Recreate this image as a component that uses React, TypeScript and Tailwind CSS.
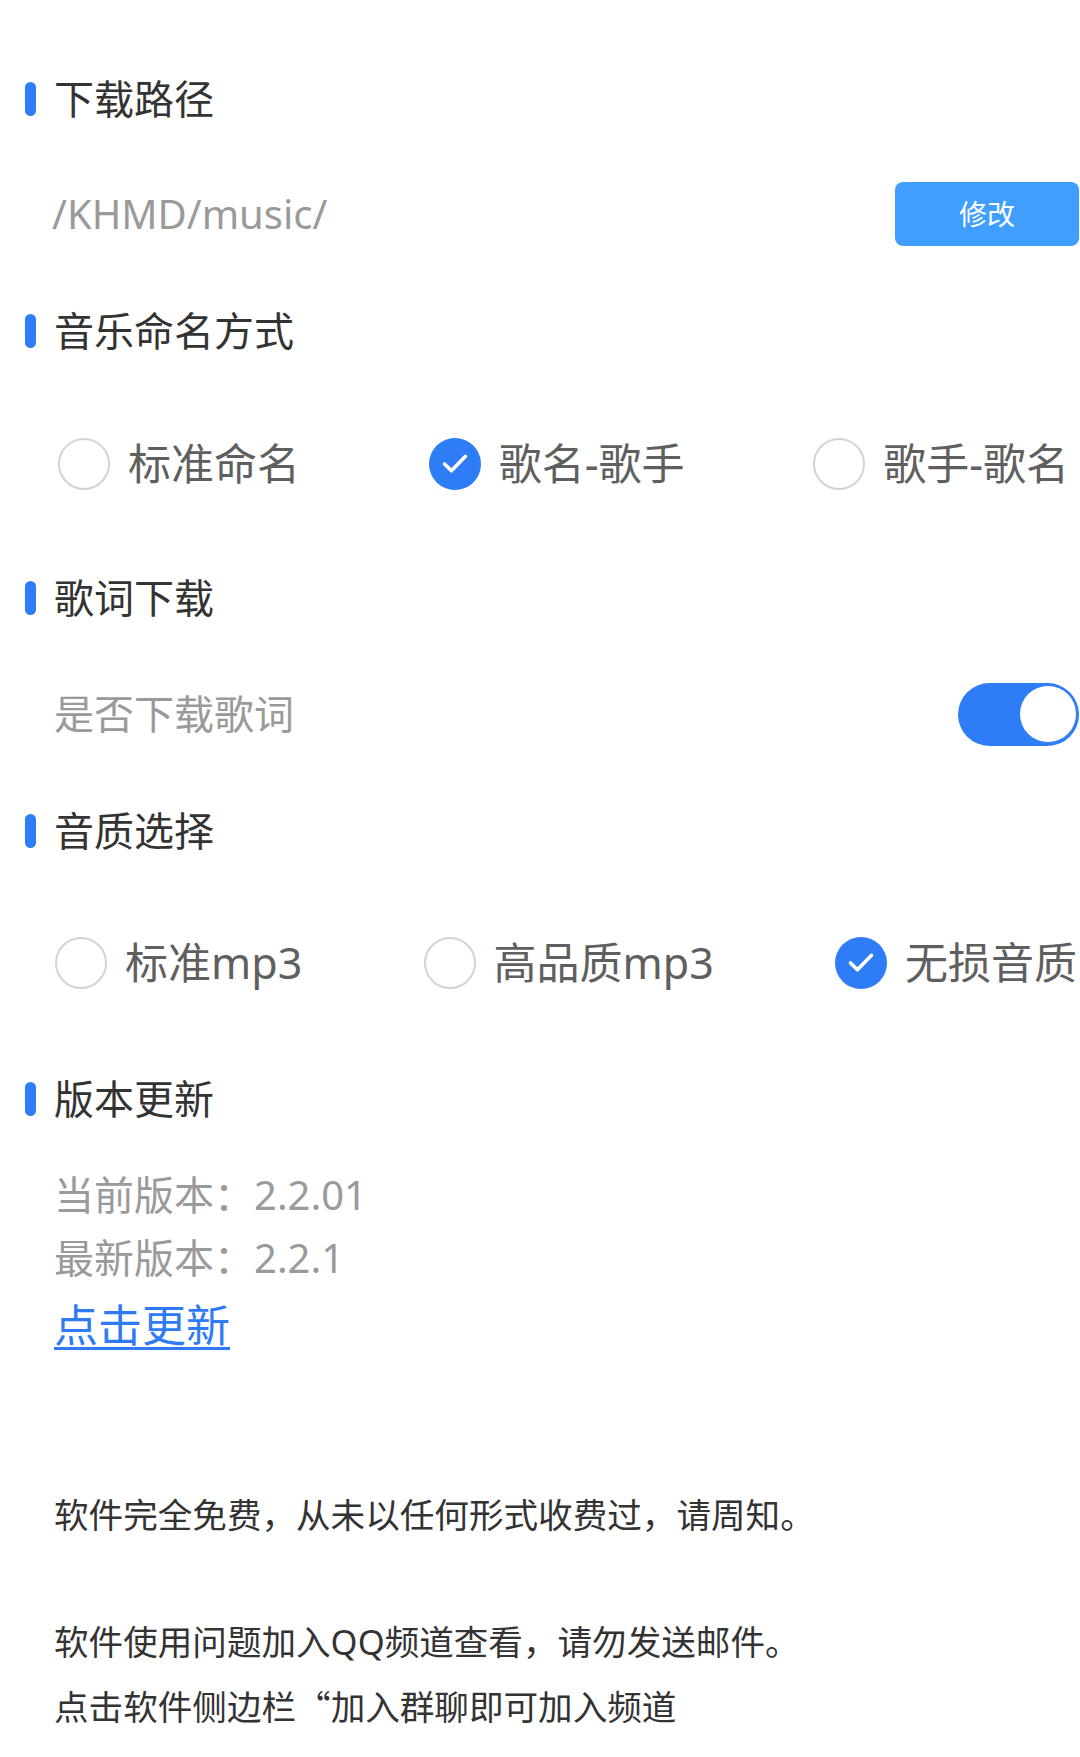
import React from "react";

const BLUE = "bg-[#2e7cf6]";

function Title({ text }: { text: string }) {
  return (
    <div className="flex items-center h-[60px]">
      <div className={`ml-[25px] w-[11px] h-[34px] rounded-full ${BLUE}`} />
      <span className="ml-[18px] text-[40px] leading-[60px] text-[#333333]">{text}</span>
    </div>
  );
}

function Radio({ checked, label }: { checked: boolean; label: string }) {
  return (
    <div className="flex items-center">
      {checked ? (
        <svg width="52" height="52" viewBox="0 0 52 52" className="shrink-0">
          <circle cx="26" cy="26" r="26" fill="#2e7cf6" />
          <polyline
            points="15.5,26 22.4,32.8 36.5,18.3"
            fill="none"
            stroke="#ffffff"
            strokeWidth="3.6"
            strokeLinecap="round"
            strokeLinejoin="round"
          />
        </svg>
      ) : (
        <div className="w-[52px] h-[52px] rounded-full border-2 border-[#d4d4d4] shrink-0" />
      )}
      <span className="ml-[18px] text-[43px] leading-[60px] text-[#5f5f5f] whitespace-nowrap">{label}</span>
    </div>
  );
}

export default function App() {
  return (
    <div className="w-[1080px] min-h-[1757px] bg-white font-['Noto_Sans','Noto_Sans_CJK_SC',sans-serif] pt-[69px]">
      <Title text="下载路径" />
      <div className="mt-[53px] h-[64px] flex items-center justify-between pl-[52px] pr-[1px]">
        <span className="text-[40px] leading-[64px] text-[#9a9a9a]">/KHMD/music/</span>
        <div className="w-[184px] h-[64px] rounded-[8px] bg-[#409eff] flex items-center justify-center text-white text-[28px]">
          修改
        </div>
      </div>

      <div className="mt-[55px]">
        <Title text="音乐命名方式" />
      </div>
      <div className="mt-[73px] h-[60px] flex items-center justify-between pl-[58px] pr-[11px]">
        <Radio checked={false} label="标准命名" />
        <Radio checked={true} label="歌名-歌手" />
        <Radio checked={false} label="歌手-歌名" />
      </div>

      <div className="mt-[74px]">
        <Title text="歌词下载" />
      </div>
      <div className="mt-[54px] h-[64px] flex items-center justify-between pl-[54px] pr-[1px]">
        <span className="text-[40px] leading-[64px] text-[#9a9a9a]">是否下载歌词</span>
        <div className={`w-[121px] h-[63px] rounded-full ${BLUE} flex items-center justify-end pr-[2px]`}>
          <div className="w-[58px] h-[58px] rounded-full bg-white border border-[#2e7cf6]" />
        </div>
      </div>

      <div className="mt-[55px]">
        <Title text="音质选择" />
      </div>
      <div className="mt-[72px] h-[60px] flex items-center justify-between pl-[55px] pr-[3px]">
        <Radio checked={false} label="标准mp3" />
        <Radio checked={false} label="高品质mp3" />
        <Radio checked={true} label="无损音质" />
      </div>

      <div className="mt-[76px]">
        <Title text="版本更新" />
      </div>
      <div className="mt-[34px] pl-[54px] text-[40px] leading-[63px] text-[#9a9a9a]">
        <div>当前版本：2.2.01</div>
        <div>最新版本：2.2.1</div>
        <div className="pt-[5px]">
          <span className="text-[44px] text-[#2f7bf5] underline decoration-[3px] underline-offset-[5px]">点击更新</span>
        </div>
      </div>

      <div className="mt-[125px] pl-[54px] text-[34.6px] leading-[63.5px] text-[#333333]">
        <div>软件完全免费，从未以任何形式收费过，请周知。</div>
        <div>&nbsp;</div>
        <div>软件使用问题加入QQ频道查看，请勿发送邮件。</div>
        <div>
          点击软件侧边栏<span className="font-['Noto_Sans_CJK_SC',sans-serif]">“</span>加入群聊即可加入频道
        </div>
      </div>
    </div>
  );
}
